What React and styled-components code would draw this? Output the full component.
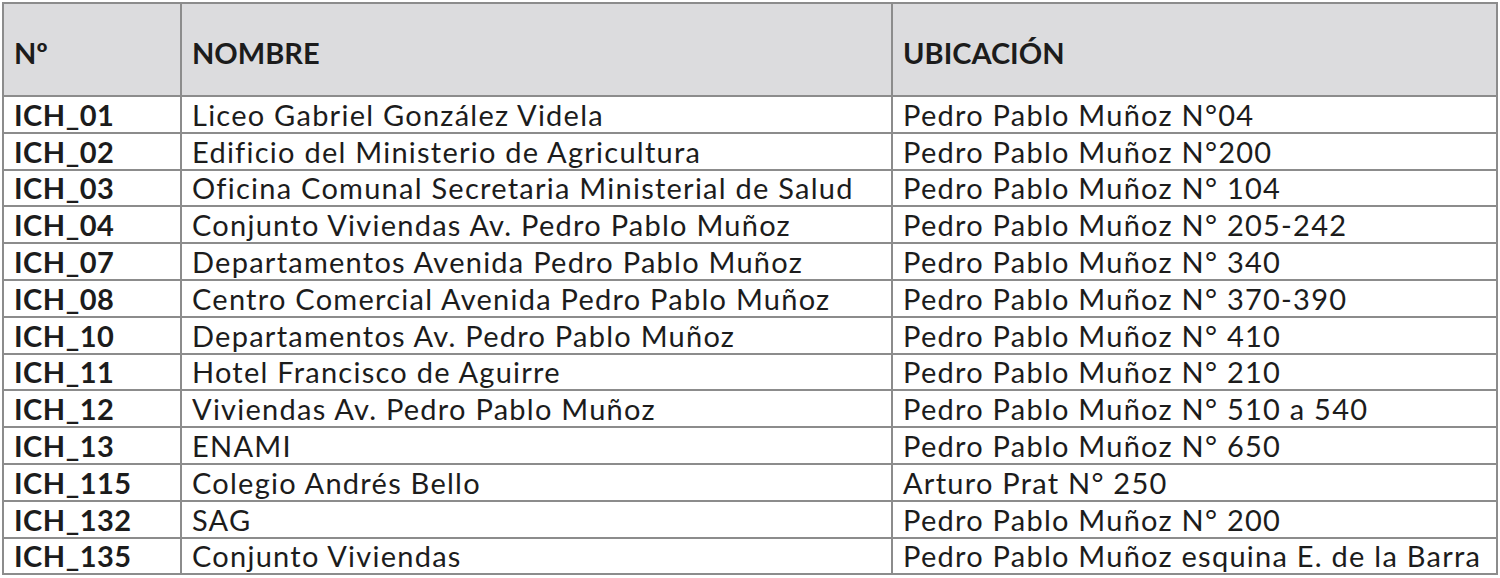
import styled, { createGlobalStyle } from "styled-components";

const GlobalStyle = createGlobalStyle`
  html, body {
    margin: 0;
    padding: 0;
    background: #fff;
  }
  body {
    font-family: Lato, "Open Sans", sans-serif;
    color: #1c1c1c;
  }
`;

const Page = styled.div`
  width: 1500px;
  height: 578px;
  padding: 2px 0 0 2px;
  box-sizing: border-box;
  overflow: hidden;
`;

const Table = styled.table`
  width: 1494px;
  border-collapse: collapse;
  table-layout: fixed;
  border: 2px solid #8c8c8c;
`;

const HeadCell = styled.th`
  height: 93px;
  background: #dcdcde;
  border: 2px solid #8c8c8c;
  text-align: left;
  font-weight: 700;
  font-size: 29px;
  padding: 6px 0 0 10px;
  box-sizing: border-box;
  vertical-align: middle;
`;

const Cell = styled.td`
  height: 36.8px;
  border: 2px solid #8c8c8c;
  font-size: 29px;
  font-weight: ${({ $bold }) => ($bold ? 700 : 400)};
  letter-spacing: ${({ $bold }) => ($bold ? "0.5px" : "1.25px")};
  padding: 0 0 0 10px;
  line-height: 1;
  white-space: nowrap;
  box-sizing: border-box;
  vertical-align: middle;
`;

const rows = [
  ["ICH_01", "Liceo Gabriel González Videla", "Pedro Pablo Muñoz N°04"],
  ["ICH_02", "Edificio del Ministerio de Agricultura", "Pedro Pablo Muñoz N°200"],
  ["ICH_03", "Oficina Comunal Secretaria Ministerial de Salud", "Pedro Pablo Muñoz N° 104"],
  ["ICH_04", "Conjunto Viviendas Av. Pedro Pablo Muñoz", "Pedro Pablo Muñoz N° 205-242"],
  ["ICH_07", "Departamentos Avenida Pedro Pablo Muñoz", "Pedro Pablo Muñoz N° 340"],
  ["ICH_08", "Centro Comercial Avenida Pedro Pablo Muñoz", "Pedro Pablo Muñoz N° 370-390"],
  ["ICH_10", "Departamentos Av. Pedro Pablo Muñoz", "Pedro Pablo Muñoz N° 410"],
  ["ICH_11", "Hotel Francisco de Aguirre", "Pedro Pablo Muñoz N° 210"],
  ["ICH_12", "Viviendas Av. Pedro Pablo Muñoz", "Pedro Pablo Muñoz N° 510 a 540"],
  ["ICH_13", "ENAMI", "Pedro Pablo Muñoz N° 650"],
  ["ICH_115", "Colegio Andrés Bello", "Arturo Prat N° 250"],
  ["ICH_132", "SAG", "Pedro Pablo Muñoz N° 200"],
  ["ICH_135", "Conjunto Viviendas", "Pedro Pablo Muñoz esquina E. de la Barra"],
];

const App = () => {
  return (
    <Page>
      <GlobalStyle />
      <Table>
        <colgroup>
          <col style={{ width: 178 }} />
          <col style={{ width: 711 }} />
          <col style={{ width: 605 }} />
        </colgroup>
        <thead>
          <tr>
            <HeadCell>Nº</HeadCell>
            <HeadCell>NOMBRE</HeadCell>
            <HeadCell>UBICACIÓN</HeadCell>
          </tr>
        </thead>
        <tbody>
          {rows.map(([id, name, place]) => (
            <tr key={id}>
              <Cell $bold>{id}</Cell>
              <Cell>{name}</Cell>
              <Cell>{place}</Cell>
            </tr>
          ))}
        </tbody>
      </Table>
    </Page>
  );
};

export default App;
